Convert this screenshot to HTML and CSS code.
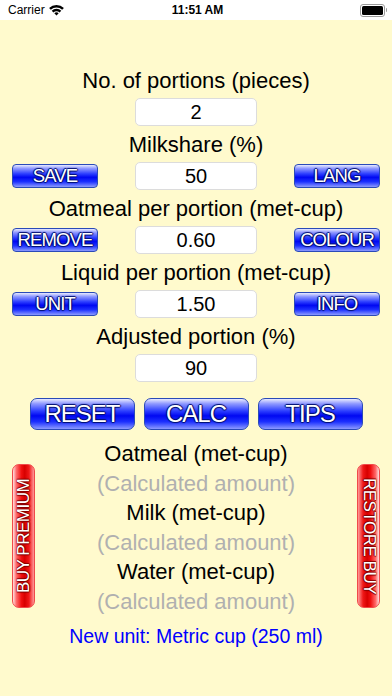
FILE: index.html
```html
<!DOCTYPE html>
<html lang="en">
<head>
    <meta charset="UTF-8">
    <meta name="viewport" content="width=device-width, initial-scale=1.0">
    <title>Oatmeal Calculator</title>
    <link rel="stylesheet" href="styles.css">
</head>
<body>
    <div class="status-bar">
        <div class="status-left">
            Carrier
            <svg class="wifi" width="15" height="11" viewBox="0 0 15 11">
                <path d="M0.08 3.08 A10.5 10.5 0 0 1 14.92 3.08 L13.16 4.84 A8 8 0 0 0 1.84 4.84 Z"/>
                <path d="M2.69 5.69 A6.8 6.8 0 0 1 12.31 5.69 L10.54 7.46 A4.3 4.3 0 0 0 4.46 7.46 Z"/>
                <path d="M7.5 10.5 L5.31 8.31 A3.1 3.1 0 0 1 9.69 8.31 Z"/>
            </svg>
        </div>
        <div class="status-time">11:51 AM</div>
        <div class="status-right">
            <div class="battery"><div class="battery-fill"></div></div>
            <div class="battery-nub"></div>
        </div>
    </div>

    <main class="screen">
        <div class="field-block">
            <div class="field-label">No. of portions (pieces)</div>
            <div class="field-row">
                <span></span>
                <input class="num-input" type="text" value="2" readonly>
                <span></span>
            </div>
        </div>

        <div class="field-block">
            <div class="field-label">Milkshare (%)</div>
            <div class="field-row">
                <button class="blue-btn">SAVE</button>
                <input class="num-input" type="text" value="50" readonly>
                <button class="blue-btn">LANG</button>
            </div>
        </div>

        <div class="field-block">
            <div class="field-label">Oatmeal per portion (met-cup)</div>
            <div class="field-row">
                <button class="blue-btn">REMOVE</button>
                <input class="num-input" type="text" value="0.60" readonly>
                <button class="blue-btn">COLOUR</button>
            </div>
        </div>

        <div class="field-block">
            <div class="field-label">Liquid per portion (met-cup)</div>
            <div class="field-row">
                <button class="blue-btn">UNIT</button>
                <input class="num-input" type="text" value="1.50" readonly>
                <button class="blue-btn">INFO</button>
            </div>
        </div>

        <div class="field-block">
            <div class="field-label">Adjusted portion (%)</div>
            <div class="field-row">
                <span></span>
                <input class="num-input" type="text" value="90" readonly>
                <span></span>
            </div>
        </div>

        <div class="action-row">
            <button class="blue-btn big-btn">RESET</button>
            <button class="blue-btn big-btn">CALC</button>
            <button class="blue-btn big-btn">TIPS</button>
        </div>

        <div class="results">
            <button class="red-btn buy-btn">BUY PREMIUM</button>
            <div class="result-list">
                <div class="result-label">Oatmeal (met-cup)</div>
                <div class="result-value">(Calculated amount)</div>
                <div class="result-label">Milk (met-cup)</div>
                <div class="result-value">(Calculated amount)</div>
                <div class="result-label">Water (met-cup)</div>
                <div class="result-value">(Calculated amount)</div>
            </div>
            <button class="red-btn restore-btn">RESTORE BUY</button>
        </div>

        <p class="unit-note">New unit: Metric cup (250 ml)</p>
    </main>
</body>
</html>
```

FILE: styles.css
```css
body {
    margin: 0;
    width: 392px;
    height: 696px;
    overflow: hidden;
    background-color: #fffacd;
    font-family: 'Liberation Sans', Arial, sans-serif;
    color: #000;
}

/* status bar */
.status-bar {
    display: grid;
    grid-template-columns: 1fr auto 1fr;
    align-items: center;
    height: 20px;
    padding: 0 5px 0 8px;
    background-color: #fff;
    font-size: 12px;
}

.status-left {
    display: flex;
    align-items: center;
    gap: 4px;
}

.status-time {
    font-weight: bold;
}

.status-right {
    display: flex;
    align-items: center;
    justify-content: flex-end;
}

.battery {
    width: 21px;
    height: 9px;
    padding: 1px;
    border: 1px solid #9a9a9a;
    border-radius: 3px;
}

.battery-fill {
    height: 100%;
    background-color: #000;
    border-radius: 1.5px;
}

.battery-nub {
    width: 1.5px;
    height: 4px;
    margin-left: 1px;
    background-color: #9a9a9a;
    border-radius: 0 1px 1px 0;
}

/* input rows */
.screen {
    padding-top: 42px;
}

.field-label {
    height: 36px;
    line-height: 38px;
    font-size: 22px;
    text-align: center;
}

.field-row {
    display: grid;
    grid-template-columns: 86px 1fr 86px;
    align-items: center;
    height: 28px;
    padding: 0 12px;
}

.num-input {
    justify-self: center;
    width: 122px;
    height: 28px;
    box-sizing: border-box;
    border: 1px solid #dcdcdc;
    border-radius: 5px;
    background-color: #fff;
    font-family: 'Liberation Sans', Arial, sans-serif;
    font-size: 20px;
    text-align: center;
    color: #000;
    padding: 0;
}

.blue-btn {
    height: 24px;
    padding: 0;
    border: 1px solid #2a4ab8;
    border-radius: 4px;
    background: linear-gradient(to bottom, #e8eaff 0%, #8e98ff 16%, #2c3eff 40%, #0008f2 56%, #1c30ff 76%, #8c9aff 100%);
    font-family: 'Liberation Sans', Arial, sans-serif;
    font-size: 18.5px;
    line-height: 22px;
    letter-spacing: -0.9px;
    color: #fff;
    text-shadow: 0 0 1px #001070, 1px 0 1px #001070, -1px 0 1px #001070, 0 1px 1px #001070, 0 -1px 1px #001070;
    cursor: pointer;
}

.action-row {
    display: flex;
    justify-content: center;
    gap: 9px;
    margin-top: 16px;
}

.big-btn {
    width: 105px;
    height: 32px;
    border-radius: 7px;
    font-size: 24px;
    line-height: 30px;
    letter-spacing: -1px;
}

/* results */
.results {
    display: grid;
    grid-template-columns: 23px 1fr 23px;
    padding: 0 12px;
    margin-top: 9px;
}

.result-list div {
    height: 29.6px;
    line-height: 30px;
    font-size: 22px;
    text-align: center;
}

.result-value {
    color: #b0b0b0;
}

.red-btn {
    align-self: start;
    margin-top: 25px;
    width: 23px;
    height: 144px;
    padding: 0;
    border: 1px solid #f04a4a;
    border-radius: 7px;
    writing-mode: vertical-rl;
    font-family: 'Liberation Sans', Arial, sans-serif;
    font-size: 17px;
    letter-spacing: -0.5px;
    color: #fff;
    text-shadow: 0 0 1px #800000, 1px 0 1px #800000, -1px 0 1px #800000, 0 1px 1px #800000;
    cursor: pointer;
}

.buy-btn {
    transform: rotate(180deg);
    background: linear-gradient(to left, #ffe0e0 0%, #ff6a6a 16%, #f01010 40%, #d80000 56%, #f01818 76%, #ff9a9a 100%);
}

.restore-btn {
    background: linear-gradient(to left, #ffe0e0 0%, #ff6a6a 16%, #f01010 40%, #d80000 56%, #f01818 76%, #ff9a9a 100%);
}

.unit-note {
    margin: 8px 0 0;
    font-size: 19.5px;
    text-align: center;
    color: #0000ff;
}
```
